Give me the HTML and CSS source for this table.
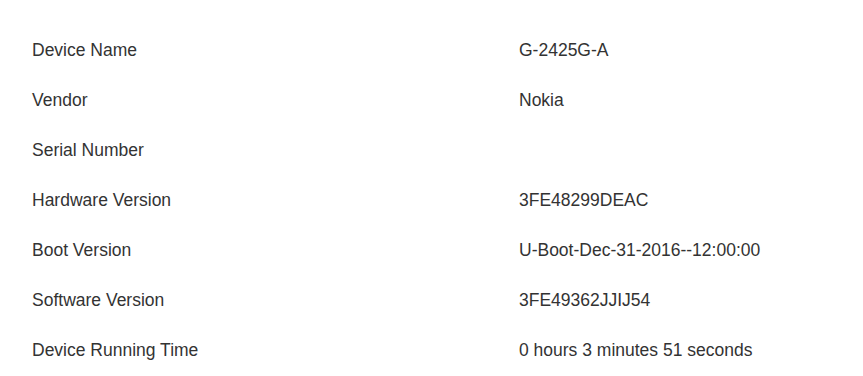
FILE: index.html
```html
<!DOCTYPE html>
<html lang="en">
<head>
  <meta charset="UTF-8">
  <meta name="viewport" content="width=device-width, initial-scale=1.0">
  <title>Device Information</title>
  <link rel="stylesheet" href="styles.css">
</head>
<body>
  <div class="info-table">
    <div class="row"><div class="label">Device Name</div><div class="value">G-2425G-A</div></div>
    <div class="row"><div class="label">Vendor</div><div class="value">Nokia</div></div>
    <div class="row"><div class="label">Serial Number</div><div class="value"></div></div>
    <div class="row"><div class="label">Hardware Version</div><div class="value">3FE48299DEAC</div></div>
    <div class="row"><div class="label">Boot Version</div><div class="value">U-Boot-Dec-31-2016--12:00:00</div></div>
    <div class="row"><div class="label">Software Version</div><div class="value">3FE49362JJIJ54</div></div>
    <div class="row"><div class="label">Device Running Time</div><div class="value">0 hours 3 minutes 51 seconds</div></div>
  </div>
</body>
</html>
```

FILE: styles.css
```css
body {
  margin: 0;
  background-color: white;
  color: #333;
  font-family: "Liberation Sans", Arial, sans-serif;
  font-size: 17.5px;
}

.info-table {
  padding: 25px 0 0 32px;
}

.row {
  display: grid;
  grid-template-columns: 487px 1fr;
  height: 50px;
  line-height: 50px;
}

.label,
.value {
  white-space: nowrap;
}
```
